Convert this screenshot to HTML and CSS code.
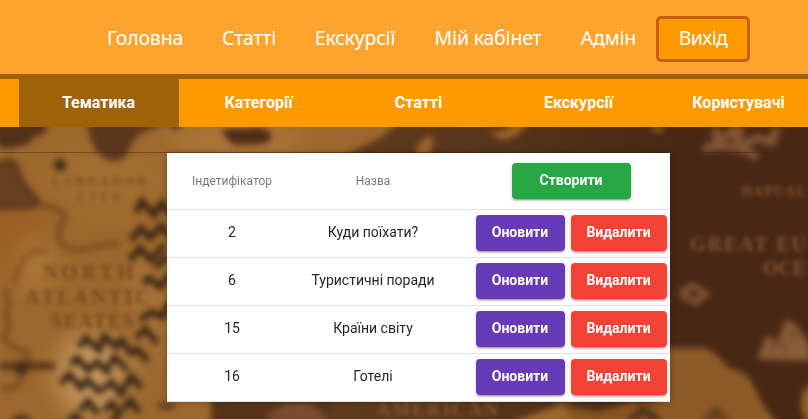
FILE: index.html
```html
<!DOCTYPE html>
<html lang="uk">
<head>
<meta charset="utf-8">
<title>Тематика</title>
<link rel="stylesheet" href="styles.css">
</head>
<body>
<header class="header">
  <nav class="nav">
    <a class="nav-link nav-home">Головна</a>
    <a class="nav-link nav-articles">Статті</a>
    <a class="nav-link nav-tours">Екскурсії</a>
    <a class="nav-link nav-account">Мій кабінет</a>
    <a class="nav-link nav-admin">Адмін</a>
    <button class="logout">Вихід</button>
  </nav>
</header>
<nav class="tabs">
  <a class="tab active">Тематика</a>
  <a class="tab">Категорії</a>
  <a class="tab">Статті</a>
  <a class="tab">Екскурсії</a>
  <a class="tab">Користувачі</a>
</nav>
<main class="content">
  <svg class="map" viewBox="0 127 808 292" preserveAspectRatio="none" aria-hidden="true">
    <defs>
      <filter id="soft" x="-10%" y="-10%" width="120%" height="120%" color-interpolation-filters="sRGB"><feGaussianBlur stdDeviation="3"/></filter>
      <filter id="label" x="-10%" y="-10%" width="120%" height="120%" color-interpolation-filters="sRGB"><feGaussianBlur stdDeviation="2"/></filter>
      <filter id="wide" x="-50%" y="-50%" width="200%" height="200%" color-interpolation-filters="sRGB"><feGaussianBlur stdDeviation="12"/></filter>
      <linearGradient id="sea" x1="0" x2="1"><stop offset="0" stop-color="#65411f"/><stop offset=".45" stop-color="#573519"/><stop offset=".75" stop-color="#482814"/><stop offset="1" stop-color="#482814"/></linearGradient>
    </defs>
    <rect y="127" width="808" height="292" fill="#9d682d"/>
    <g filter="url(#wide)">
      <ellipse cx="20" cy="240" rx="34" ry="40" fill="#995f24"/>
      <ellipse cx="110" cy="180" rx="60" ry="35" fill="#a26d31"/>
      <ellipse cx="35" cy="265" rx="18" ry="30" fill="#ac7838"/>
      <ellipse cx="92" cy="375" rx="36" ry="42" fill="#c2945e"/>
      <ellipse cx="235" cy="140" rx="70" ry="14" fill="#ad7a3e"/>
      <ellipse cx="150" cy="300" rx="14" ry="60" fill="#a9753a"/>
    </g>
    <g filter="url(#soft)">
      <path d="M405 117H830V430H782Q762 408 754 388Q747 372 728 368Q718 354 704 348H660V430H650L560 405 490 430H211Q208 400 260 385L340 160Q352 150 380 138Z" fill="url(#sea)"/>
      <path d="M211 396H330V425H211Z" fill="#56341a"/>
      <path d="M655 348H702Q712 353 724 365 734 371 746 374 749 392 760 405L770 425H600L610 408 655 402Z" fill="#8c5a26"/>
      <path d="M555 402 572 402 566 406 598 412 630 402H660V425H575L566 412Z" fill="#87531f"/>
      <path d="M808 386Q799 396 802 410L808 425H820V380Z" fill="#966128"/>
      <path d="M-5 118H48Q47 138 35 136 28 147 18 146 8 153-5 143Z" fill="#52301a"/>
      <path d="M88 115H180Q152 130 145 131 133 137 130 148 127 160 115 161 98 159 93 144Q87 136 88 115Z" fill="#5a361c"/>
      <path d="M158 117H190L176 130Z" fill="#57331a"/>
      <path d="M-8 164 10 160Q18 161 20 176L29 190 39 201 33 207-8 209Z" fill="#66401f" stroke="#51311a" stroke-width="3"/>
      <path d="M222 130Q228 128 246 129 262 126 270 132 275 142 261 144L235 145Q226 141 222 130Z" fill="#4f2b17"/>
      <path d="M415 154Q417 143 430 135L434 142 428 158Z" fill="#9e6428"/>
      <path d="M487 131Q501 135 517 122H528Q518 140 500 139Z" fill="#9c6528"/>
      <ellipse cx="658" cy="129" rx="6" ry="3" fill="#9b6527"/>
      <g fill="none" stroke="#613a1a" stroke-width="4.5" opacity=".7">
        <path d="M36 205Q67 208 65 219 56 226 60 242 66 250 84 250 99 244 120 244"/>
        <path d="M5 288Q12 305 5 316 14 325 3 337 11 349 27 352 29 365 20 381 12 393 0 387"/>
        <path d="M48 250Q32 250 25 258 16 270 14 285" opacity=".7"/>
      </g>
      <circle cx="60" cy="165" r="6" fill="#3d2913"/>
      <path d="M0 366H55" stroke="#4b2e18" stroke-width="8" opacity=".85"/>
      <circle cx="21" cy="368" r="7" fill="#462b16"/>
      <ellipse cx="21" cy="420" rx="9" ry="5" fill="#4a3018"/>
      <g fill="none" stroke="#342312" stroke-width="6">
        <path d="M136 212 142 201 154 215 162 203 170 214M131 240 141 228 150 238 161 226 170 236M130 260 140 248 151 260 164 245M143 283 149 278 160 287 169 275M140 320 152 312 162 317 170 302M155 268 168 255"/>
        <path d="M79 347 86 338 99 350 104 336 116 347 122 340 131 354M71 365 77 358 88 370 97 362 110 374M61 384 69 374 81 388 87 380 101 393M80 411 88 401 98 414M104 411 112 403 120 415M102 390 112 382 121 394 131 376 141 388M108 367 115 357 127 370M130 355 137 349 148 361M136 338 145 329 157 343M123 410 130 400 139 412M69 421 75 416 82 424M110 424 120 414"/>
      </g>
      <g fill="none" stroke="#4b3018" stroke-width="7">
        <path d="M630 422 642 410 650 414 660 425"/>
        <path d="M158 406H174M706 421 716 411 726 422" opacity=".75"/>
      </g>
      <g fill="none" stroke="#845635" stroke-width="8">
        <path d="M715 128 717 140 732 133 743 144 758 138 772 142 777 128M703 148 724 146 744 149 757 158M730 128 744 132"/>
        <path d="M682 292 692 286 706 294 696 302 680 294" stroke-width="6"/>
      </g>
      <path d="M757 359 767 335 777 342 786 319 797 326 810 345V361Z" fill="#8a5c38"/>
      <path d="M771 350 777 339 786 351M787 334Q796 329 795 340" stroke="#573319" stroke-width="2" fill="none"/>
      <path d="M268 414 285 404 307 402 321 411 330 422H268Z" fill="#7b4d2d"/>
    </g>
    <g filter="url(#label)">
      <g class="land-label">
        <text x="52" y="185" textLength="94">LABRADOR</text>
        <text x="78" y="201" textLength="43">CITY</text>
        <text class="large" x="43" y="279" textLength="90">NORTH</text>
        <text class="large" x="25" y="304" textLength="125">ATLANTIC</text>
        <text class="large" x="51" y="328" textLength="83">SEATES</text>
      </g>
      <g class="sea-label">
        <text x="690" y="251" textLength="116">GREAT EU</text>
        <text x="763" y="275" textLength="43">OCE</text>
        <text class="small" x="741" y="196" textLength="65">HAPUAL</text>
        <text x="376" y="416" textLength="122">AMERICAN</text>
      </g>
    </g>
    <path d="M0 152.5H808" stroke="#402411" stroke-opacity=".48"/>
  </svg>
  <table class="themes">
    <colgroup><col class="col-id"><col class="col-name"><col class="col-actions"></colgroup>
    <thead><tr><th>Індетифікатор</th><th>Назва</th><th><button class="btn create">Створити</button></th></tr></thead>
    <tbody>
      <tr><td>2</td><td>Куди поїхати?</td><td><div class="actions"><button class="btn update">Оновити</button><button class="btn delete">Видалити</button></div></td></tr>
      <tr><td>6</td><td>Туристичні поради</td><td><div class="actions"><button class="btn update">Оновити</button><button class="btn delete">Видалити</button></div></td></tr>
      <tr><td>15</td><td>Країни світу</td><td><div class="actions"><button class="btn update">Оновити</button><button class="btn delete">Видалити</button></div></td></tr>
      <tr><td>16</td><td>Готелі</td><td><div class="actions"><button class="btn update">Оновити</button><button class="btn delete">Видалити</button></div></td></tr>
    </tbody>
  </table>
</main>
</body>
</html>
```
FILE: styles.css
```css
* { box-sizing: border-box; }
body { margin: 0; height: 419px; overflow: hidden; font-family: Roboto, "Liberation Sans", sans-serif; }
.header { height: 79px; background: #ffa52f; border-bottom: 5px solid #9f6207; padding: 16px 0 0 87px; }
.nav { display: flex; height: 46px; font: 19.5px/44px "Noto Sans", sans-serif; color: #fff; }
.nav-link { text-align: center; white-space: nowrap; letter-spacing: -.2px; }
.nav-home { width: 116px; }
.nav-articles { width: 92px; }
.nav-tours { width: 120px; }
.nav-account { width: 146px; }
.nav-admin { width: 95px; }
.logout { width: 94px; height: 46px; padding: 0 0 2px; border: 3px solid #c66300; border-radius: 5px; background: #ff9900; color: #fff; font: 19.5px/38px "Noto Sans", sans-serif; letter-spacing: -.6px; }
.tabs { display: flex; height: 48px; padding-left: 19px; background: #ff9900; }
.tab { flex: 0 0 160px; padding-right: 1px; color: #fff; font-size: 16px; font-weight: 700; line-height: 47px; text-align: center; }
.tab.active { background: #9f6207; }
.content { position: relative; height: 292px; padding: 26px 0 0 167px; overflow: hidden; }
.map { position: absolute; inset: 0; width: 100%; height: 100%; }
.land-label { font: 13px "Liberation Serif", serif; fill: #4d3018; opacity: .65; }
.land-label .large { font-size: 20px; font-weight: 700; opacity: .85; }
.sea-label { font: 700 20px "Liberation Serif", serif; fill: #8c5a35; opacity: .85; }
.sea-label .small { font-size: 14px; }
.themes { position: relative; width: 503px; table-layout: fixed; border-collapse: separate; border-spacing: 0; background: #fff; box-shadow: 0 0 6px rgba(0, 0, 0, .3); }
.col-id { width: 130px; }
.col-name { width: 152px; }
.col-actions { width: 221px; }
.themes th, .themes td { padding: 0; border-bottom: 1px solid #e0e0e0; text-align: center; vertical-align: middle; white-space: nowrap; }
.themes th { height: 57px; color: rgba(0, 0, 0, .54); font-size: 12px; font-weight: 400; }
.themes td { height: 48px; padding-bottom: 4px; color: rgba(0, 0, 0, .87); font-size: 14px; }
.themes td:last-child { padding: 0 0 1px; }
.themes th:last-child { padding-left: 24px; }
.actions { display: flex; gap: 6px; padding: 0 3px 0 27px; }
.btn { display: block; height: 36px; padding: 0 1px 2px 0; border: 0; border-radius: 4px; color: #fff; font: 700 14px/34px Roboto, sans-serif; box-shadow: 0 3px 1px -2px rgba(0,0,0,.2), 0 2px 2px rgba(0,0,0,.14), 0 1px 5px rgba(0,0,0,.12); }
.create { width: 119px; margin: 0 auto; background: #28a745; }
.update { width: 89px; background: #673ab7; }
.delete { width: 96px; background: #f44336; }
```
